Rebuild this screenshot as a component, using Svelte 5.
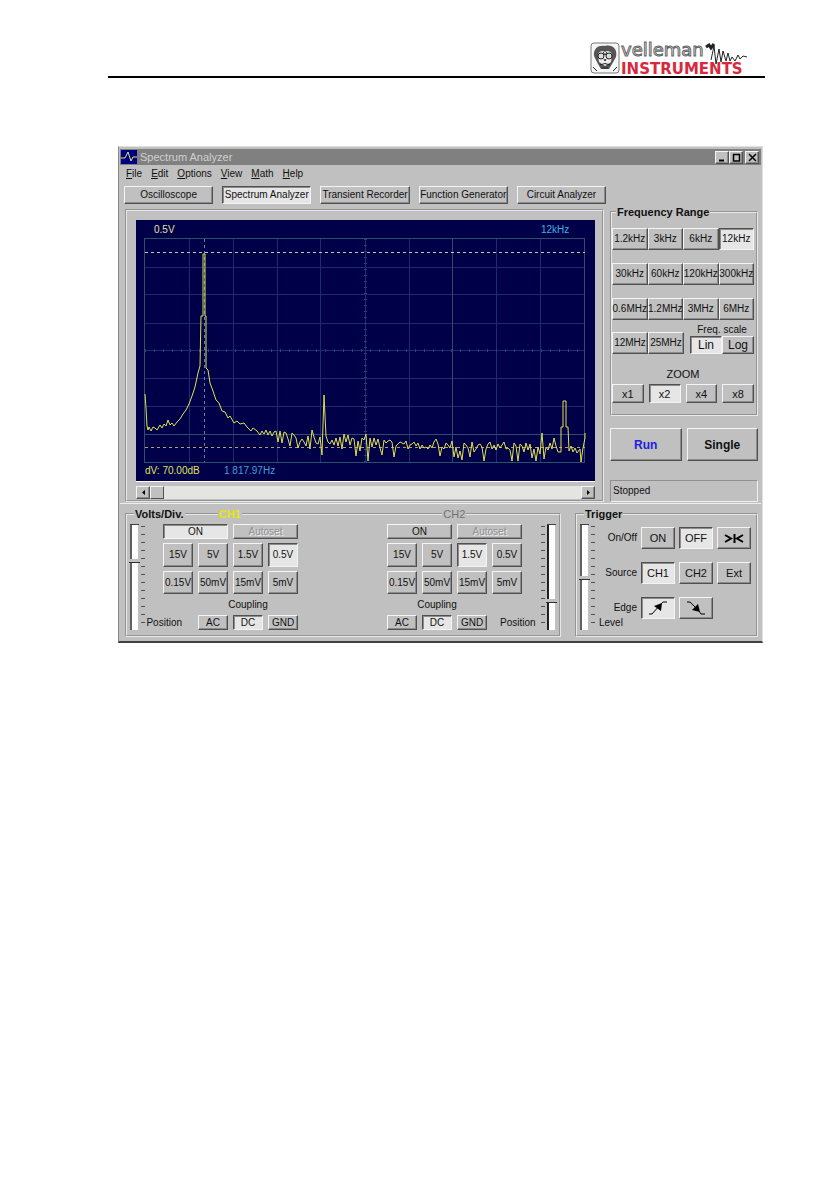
<script lang="ts">
	const menus = ['File', 'Edit', 'Options', 'View', 'Math', 'Help'];
	const tabs = [
		'Oscilloscope',
		'Spectrum Analyzer',
		'Transient Recorder',
		'Function Generator',
		'Circuit Analyzer'
	];
	const ranges = [
		'1.2kHz', '3kHz', '6kHz', '12kHz',
		'30kHz', '60kHz', '120kHz', '300kHz',
		'0.6MHz', '1.2MHz', '3MHz', '6MHz'
	];
	const highRanges = ['12MHz', '25MHz'];
	const volts = ['15V', '5V', '1.5V', '0.5V', '0.15V', '50mV', '15mV', '5mV'];

	let tab = $state('Spectrum Analyzer');
	let range = $state('12kHz');
	let scale = $state('Lin');
	let zoom = $state('x2');
	let triggerOn = $state('OFF');
	let source = $state('CH1');
	let edge = $state('rising');
	let ch1 = $state({ on: true, volts: '0.5V', coupling: 'DC', position: 66 });
	let ch2 = $state({ on: false, volts: '1.5V', coupling: 'DC', position: 27 });
	let level = $state(50);

	const gridX = [53, 97, 141, 184, 229, 273, 316, 360, 404];
	const gridY = [47, 74, 103, 130, 158, 186, 214];

	// peak and skirt of the fundamental
	const skirt =
		'9,174 10,188 11,206 12,210 13,207 15,211 17,207 19,208 21,210 24,205 26,208 28,204 30,206 32,200 34,205 36,203 38,206 41,202 44,199 47,194 50,190 53,184 56,176 59,167 62,153 64,146 65,96 67,96 67,34 69,34 69,96 70,96 70,148 72,150 74,163 77,171 80,180 83,183 86,191 89,192 92,198 94,196 98,203 101,201 104,204 108,203 111,207 115,211 117,208 121,211 124,215';

	// noise floor, sampled every two units up to the second harmonic
	const floor = [
		211, 214, 210, 215, 211, 216, 212, 211, 222, 211, 223, 212, 213, 219, 226,
		213, 215, 218, 228, 222, 219, 222, 226, 216, 229, 210, 217, 223, 224, 217, 235, 175, 216,
		222, 224, 220, 225, 218, 226, 217, 229, 214, 222, 215, 225, 218, 219, 236, 221, 231, 218, 220,
		214, 241, 218, 227, 218, 225, 219, 228, 235, 220, 223, 221, 220, 222, 237, 226, 224, 222, 223,
		224, 221, 229, 225, 224, 222, 226, 223, 229, 225, 228, 227, 229, 225, 228, 222, 219, 224, 236,
		227, 229, 223, 225, 228, 221, 237, 227, 238, 231, 240, 223, 225, 228, 237, 222, 232, 229, 225,
		224, 227, 241, 229, 224, 222, 229, 225, 230, 224, 228, 225, 222, 229, 228, 230, 241, 223, 226,
		241, 224, 226, 232, 223, 230, 224, 238, 229, 241, 227, 234, 213, 239, 227, 230, 223, 229, 218,
		226, 232
	];
	const trace =
		skirt +
		' ' +
		floor.map((y, i) => `${126 + i * 2},${y}`).join(' ') +
		' 425,232 425,207 427,207 427,181 430,181 430,207 432,207 433,231 435,226 437,232 439,228 441,233 444,229 445,242 447,228 449,218 449,213';
</script>

{#snippet channel(name, ch, left)}
	<div class="channel" class:left>
		<button class="wide" class:on={ch.on} onclick={() => (ch.on = !ch.on)}>ON</button>
		<button class="wide" disabled>Autoset</button>
		{#each volts as v}
			<button class:on={ch.volts === v} onclick={() => (ch.volts = v)}>{v}</button>
		{/each}
		<span class="coupling">Coupling</span>
		{#if left}<label class="position" for="pos-{name}">Position</label>{/if}
		{#each ['AC', 'DC', 'GND'] as c}
			<button class:on={ch.coupling === c} onclick={() => (ch.coupling = c)}>{c}</button>
		{/each}
		{#if !left}<label class="position" for="pos-{name}">Position</label>{/if}
	</div>
{/snippet}

<div class="page">
	<header>
		<svg class="logo" width="158" height="34" viewBox="0 0 158 34" role="img" aria-label="Velleman Instruments">
			<rect x="1" y="1" width="28" height="30" rx="3" fill="#f6f6f6" stroke="#777" />
			<path d="M4 14C3 6 9 3 15 4C22 2 28 7 26 15L22 22L19 27H11L8 22Z" fill="#555" />
			<path d="M8 12Q11 7 15 10Q19 7 22 12L21 20L15 24L9 20Z" fill="#eee" />
			<circle cx="11" cy="14" r="3" fill="#ddd" stroke="#222" />
			<circle cx="19" cy="14" r="3" fill="#ddd" stroke="#222" />
			<path d="M13 10L15 13L17 10M14 17L15 19L16 17M10 23Q15 20 20 23M12 26H18M3 25L7 29M27 25L23 29" fill="none" stroke="#222" />
			<text class="brand" x="31" y="14">velleman</text>
			<text class="sub" x="31" y="32">INSTRUMENTS</text>
			<path d="M116 5L119 3L121 6L124 2" fill="none" stroke="#222" stroke-width="3" />
			<path d="M121 18L124 4L126 22L129 7L131 20L133 9L136 19L138 11L140 19L142 15L145 19L148 13L150 17L153 14L157 15" fill="none" stroke="#222" />
		</svg>
	</header>

	<main class="window">
		<div class="title">
			<svg width="16" height="14" viewBox="0 0 16 14">
				<rect width="16" height="14" fill="#000080" />
				<path d="M0 8H4L7 2L10 11L12 7H16" fill="none" stroke="#e8e870" />
			</svg>
			<h1>Spectrum Analyzer</h1>
			<button aria-label="Minimize"><svg width="9" height="9" viewBox="0 0 9 9"><path d="M1 7.5H6" stroke="#000" stroke-width="2" /></svg></button>
			<button aria-label="Restore"><svg width="9" height="9" viewBox="0 0 9 9"><path d="M1 1.5H8M1.5 1V8H7.5V1" fill="none" stroke="#000" stroke-width="1.5" /></svg></button>
			<button class="close" aria-label="Close"><svg width="9" height="9" viewBox="0 0 9 9"><path d="M1 1L8 8M8 1L1 8" stroke="#000" stroke-width="1.5" /></svg></button>
		</div>

		<nav class="menu">
			{#each menus as m}
				<a href="#{m}"><u>{m[0]}</u>{m.slice(1)}</a>
			{/each}
		</nav>

		<div class="tabs">
			{#each tabs as t}
				<button class:on={tab === t} onclick={() => (tab = t)}>{t}</button>
			{/each}
		</div>

		<div class="upper">
			<section class="scope">
				<svg class="screen" viewBox="0 0 459 261">
					<rect width="459" height="261" fill="#000048" />
					<g stroke="#1c2c6c">
						{#each gridX as x}
							<path d="M{x}.5 19V242" />
						{/each}
						{#each gridY as y}
							<path d="M9 {y}.5H449" />
						{/each}
					</g>
					<path d="M229.5 19V242" stroke="#2a4078" stroke-width="3" stroke-dasharray="1 5" />
					<path d="M9 130.5H449" stroke="#2a4078" stroke-width="3" stroke-dasharray="1 8" />
					<rect x="8.5" y="18.5" width="440" height="224" fill="none" stroke="#2c5068" />
					<path d="M316.5 19V242M9 214.5H449" stroke="#2e4a70" />
					<path d="M9 32.5H449" stroke="#c8c8a0" stroke-dasharray="3 3" />
					<path d="M9 227.5H449" stroke="#b89a70" stroke-dasharray="3 3" />
					<path d="M68.5 19V242" stroke="#5088b0" stroke-dasharray="3 3" />
					<polyline points={trace} fill="none" stroke="#e0e050" />
					<text x="18" y="13" fill="#e0e0a0">0.5V</text>
					<text x="405" y="13" fill="#40b0e0">12kHz</text>
					<text x="9" y="254" fill="#e0e060">dV: 70.00dB</text>
					<text x="88" y="254" fill="#40a0d8">1 817.97Hz</text>
				</svg>
				<div class="scroll">
					<button aria-label="Scroll left"><svg width="5" height="5" viewBox="0 0 5 5"><path d="M4 0V5L1 2.5Z" /></svg></button>
					<input type="range" value="0" aria-label="Frequency offset" />
					<button aria-label="Scroll right"><svg width="5" height="5" viewBox="0 0 5 5"><path d="M1 0V5L4 2.5Z" /></svg></button>
				</div>
			</section>

			<aside>
				<fieldset class="frequency">
					<legend>Frequency Range</legend>
					<div class="ranges">
						{#each ranges as r}
							<button class:on={range === r} onclick={() => (range = r)}>{r}</button>
						{/each}
					</div>
					<div class="high">
						<div class="pair">
							{#each highRanges as r}
								<button class:on={range === r} onclick={() => (range = r)}>{r}</button>
							{/each}
						</div>
						<div class="scale">
							<span>Freq. scale</span>
							<div class="pair">
								{#each ['Lin', 'Log'] as s}
									<button class:on={scale === s} onclick={() => (scale = s)}>{s}</button>
								{/each}
							</div>
						</div>
					</div>
					<p class="zoom-label">ZOOM</p>
					<div class="zoom">
						{#each ['x1', 'x2', 'x4', 'x8'] as z}
							<button class:on={zoom === z} onclick={() => (zoom = z)}>{z}</button>
						{/each}
					</div>
				</fieldset>
				<div class="actions">
					<button class="run">Run</button>
					<button>Single</button>
				</div>
				<output>Stopped</output>
			</aside>
		</div>

		<div class="lower">
			<fieldset class="volts">
				<legend>Volts/Div.</legend>
				<span class="tag one">CH1</span>
				<span class="tag two">CH2</span>
				<input class="slider" id="pos-CH1" type="range" bind:value={ch1.position} />
				<i class="ticks"></i>
				{@render channel('CH1', ch1, true)}
				{@render channel('CH2', ch2, false)}
				<i class="ticks"></i>
				<input class="slider dark" id="pos-CH2" type="range" bind:value={ch2.position} />
			</fieldset>

			<fieldset class="trigger">
				<legend>Trigger</legend>
				<input class="slider" id="level" type="range" bind:value={level} />
				<i class="ticks"></i>
				<div class="rows">
					<span>On/Off</span>
					<button class:on={triggerOn === 'ON'} onclick={() => (triggerOn = 'ON')}>ON</button>
					<button class:on={triggerOn === 'OFF'} onclick={() => (triggerOn = 'OFF')}>OFF</button>
					<button aria-label="Center level">
						<svg width="21" height="11" viewBox="0 0 21 11"><path d="M1 2L7 5.5L1 9M19 2L13 5.5L19 9M10.5 1V10" fill="none" stroke="#000" stroke-width="2" /></svg>
					</button>
					<span>Source</span>
					{#each ['CH1', 'CH2', 'Ext'] as s}
						<button class:on={source === s} onclick={() => (source = s)}>{s}</button>
					{/each}
					<span>Edge</span>
					<button aria-label="Rising edge" class:on={edge === 'rising'} onclick={() => (edge = 'rising')}>
						<svg width="22" height="16" viewBox="0 0 22 16"><path d="M2 14H5L13 5L16 2H20" fill="none" stroke="#000" /><path d="M15 3L14 11L7 6Z" /></svg>
					</button>
					<button aria-label="Falling edge" class:on={edge === 'falling'} onclick={() => (edge = 'falling')}>
						<svg width="22" height="16" viewBox="0 0 22 16"><path d="M2 2H5L14 11L16 14H20" fill="none" stroke="#000" /><path d="M15 12L7 10L13 4Z" /></svg>
					</button>
				</div>
				<label class="level" for="level">Level</label>
			</fieldset>
		</div>
	</main>
</div>

<style>
	:global(body) {
		background: #fff;
	}
	.page {
		padding: 42px 73px 40px 108px;
		font: 10px/12px 'Liberation Sans', Arial, sans-serif;
		color: #111;
	}
	header {
		display: flex;
		justify-content: flex-end;
		padding-right: 17px;
		border-bottom: 2px solid #000;
		margin-bottom: 68px;
	}
	.logo {
		display: block;
		overflow: visible;
	}
	.brand {
		font: 18px 'DejaVu Sans', sans-serif;
		fill: #fff;
		stroke: #666;
	}
	.sub {
		font: bold 15px 'DejaVu Sans', sans-serif;
		fill: #d8283c;
	}
	.window {
		margin: 0 2px 0 10px;
		padding: 2px 1px 4px;
		background: #c0c0c0;
		border: 1px solid #e0e0e0;
		border-left-color: #888;
		border-bottom: 2px solid #404040;
	}
	button {
		display: flex;
		align-items: center;
		justify-content: center;
		min-width: 0;
		padding: 0;
		font: inherit;
		color: inherit;
		white-space: nowrap;
		background: #c0c0c0;
		border: 1px solid;
		border-color: #f4f4f4 #505050 #505050 #f4f4f4;
		box-shadow: inset -1px -1px #8c8c8c;
	}
	button.on {
		background: #e6e6e6;
		border-color: #505050 #f4f4f4 #f4f4f4 #505050;
		box-shadow: inset 1px 1px #8c8c8c;
	}
	button:disabled {
		color: #909090;
		text-shadow: 1px 1px #eee;
	}
	.title {
		display: flex;
		align-items: center;
		height: 16px;
		padding: 0 2px 0 1px;
		background: #808080;
	}
	.title h1 {
		flex: 1;
		margin: 0 0 0 3px;
		font-size: 11px;
		font-weight: normal;
		color: #d0d0d0;
	}
	.title button {
		width: 14px;
		height: 13px;
	}
	.title .close {
		margin-left: 2px;
	}
	.menu {
		display: flex;
		gap: 9px;
		height: 18px;
		padding-left: 6px;
		line-height: 17px;
	}
	.menu a {
		color: inherit;
		text-decoration: none;
	}
	.tabs {
		display: flex;
		gap: 9px;
		padding: 3px 155px 5px 4px;
	}
	.tabs button {
		flex: 1;
		height: 18px;
	}
	.upper {
		display: flex;
		padding: 0 3px 1px 5px;
		border-bottom: 1px solid #eee;
	}
	.scope {
		flex: 1;
		min-width: 0;
		padding: 9px 7px 1px 9px;
		border: 2px groove #e8e8e8;
	}
	.screen {
		display: block;
		width: 100%;
		font-size: 10px;
		border-bottom: 1px solid #fff;
	}
	.scroll {
		display: flex;
		height: 13px;
		margin-top: 4px;
	}
	.scroll button {
		width: 14px;
	}
	.scroll input {
		flex: 1;
		min-width: 0;
		margin: 0;
		appearance: none;
		background: #e4e4e0;
	}
	.scroll input::-webkit-slider-thumb {
		appearance: none;
		width: 14px;
		height: 13px;
		background: #c0c0c0;
		border: 1px solid;
		border-color: #f4f4f4 #505050 #505050 #f4f4f4;
	}
	aside {
		display: flex;
		flex-direction: column;
		width: 148px;
		margin: -3px 0 0 6px;
	}
	fieldset {
		min-width: 0;
		margin: 0;
		padding: 0;
		border: 2px groove #e8e8e8;
	}
	legend {
		margin-left: 4px;
		padding: 0 1px;
		font-size: 11px;
		font-weight: bold;
	}
	.frequency {
		padding: 10px 2px 11px 0;
	}
	.ranges {
		display: grid;
		grid-template-columns: repeat(4, 1fr);
		row-gap: 13px;
	}
	.ranges button,
	.high > .pair button {
		height: 22px;
	}
	.pair {
		display: grid;
		grid-template-columns: 1fr 1fr;
	}
	.high {
		display: grid;
		grid-template-columns: 72px 1fr;
		column-gap: 6px;
		align-items: end;
		margin-top: 4px;
	}
	.scale {
		text-align: center;
	}
	.scale button {
		height: 18px;
		font-size: 12px;
	}
	.zoom-label {
		margin: 14px 0 4px;
		font-size: 11px;
		text-align: center;
	}
	.zoom {
		display: grid;
		grid-template-columns: repeat(4, 1fr);
		gap: 5px;
	}
	.zoom button {
		height: 19px;
		font-size: 11px;
	}
	.actions {
		display: grid;
		grid-template-columns: 1fr 1fr;
		gap: 5px;
		margin-top: 12px;
	}
	.actions button {
		height: 33px;
		font-size: 12px;
		font-weight: bold;
	}
	.actions .run {
		color: #2020e0;
	}
	output {
		margin-top: auto;
		padding: 4px 2px;
		border: 1px solid;
		border-color: #909090 #f0f0f0 #f0f0f0 #909090;
	}
	.lower {
		display: flex;
		gap: 14px;
		padding: 4px 3px 0 5px;
	}
	.volts,
	.trigger {
		position: relative;
		display: flex;
		padding: 4px 3px 5px;
	}
	.volts {
		flex: 1;
	}
	.trigger {
		width: 183px;
		box-sizing: border-box;
	}
	.tag {
		position: absolute;
		top: -12px;
		padding: 0 1px;
		background: #c0c0c0;
		font-size: 11px;
	}
	.one {
		left: 21%;
		color: #e8e800;
		font-weight: bold;
	}
	.two {
		left: 73%;
		color: #707070;
	}
	.slider {
		writing-mode: vertical-lr;
		direction: rtl;
		appearance: none;
		width: 9px;
		height: 106px;
		margin: 0;
		background: linear-gradient(90deg, #606060 2px, #fff 2px 8px, #c0c0c0 8px);
		border-top: 1px solid #404040;
		box-sizing: border-box;
	}
	.slider::-webkit-slider-thumb {
		appearance: none;
		width: 11px;
		height: 4px;
		background: #c0c0c0;
		border-bottom: 1px solid #303030;
	}
	.dark {
		background: linear-gradient(90deg, #202020 2px, #fff 2px 8px, #c0c0c0 8px);
	}
	.ticks {
		width: 4px;
		height: 98px;
		margin: 2px 2px 0;
		background: repeating-linear-gradient(#505050 0 1px, transparent 1px 8px);
	}
	.channel {
		display: grid;
		grid-template-columns: repeat(4, 30px);
		grid-template-rows: 15px 24px 23px 13px 15px;
		gap: 4px 5px;
		margin-right: 17px;
	}
	.channel.left {
		margin: 0 auto 0 16px;
	}
	.wide {
		grid-column: span 2;
	}
	.coupling {
		grid-column: 1 / 5;
		align-self: end;
		padding-right: 35px;
		text-align: center;
	}
	.left .coupling {
		padding: 0 0 0 35px;
	}
	.position {
		align-self: center;
		justify-self: start;
		margin-left: 8px;
	}
	.left .position {
		justify-self: end;
		margin: 0 11px 0 0;
	}
	.rows {
		display: grid;
		grid-template-columns: 1fr repeat(3, 34px);
		grid-auto-rows: 22px;
		gap: 13px 4px;
		flex: 1;
		padding: 3px 2px 0 0;
	}
	.rows span {
		align-self: center;
		text-align: right;
	}
	.rows button {
		font-size: 11px;
	}
	.level {
		position: absolute;
		left: 22px;
		bottom: 6px;
	}
</style>
